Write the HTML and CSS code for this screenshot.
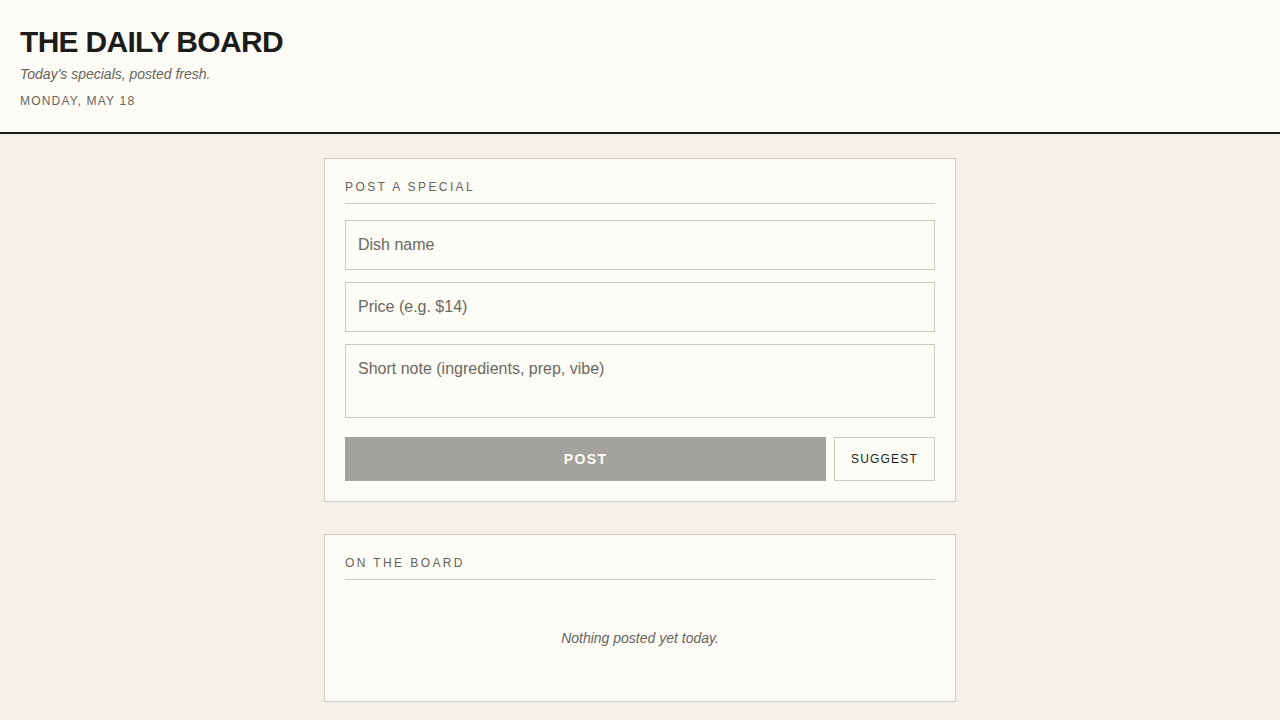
FILE: index.html
```html
<!DOCTYPE html>
<html lang="en">
<head>
    <meta charset="UTF-8">
    <title>The Daily Board</title>
    <link rel="stylesheet" href="styles.css">
</head>
<body>
<header class="masthead">
    <h1 class="title">THE DAILY BOARD</h1>
    <p class="tagline">Today's specials, posted fresh.</p>
    <p class="date">MONDAY, MAY 18</p>
</header>
<main class="page">
    <section class="card">
        <h2 class="card-head">POST A SPECIAL</h2>
        <form class="form">
            <input class="field" type="text" placeholder="Dish name">
            <input class="field" type="text" placeholder="Price (e.g. $14)">
            <textarea class="field note" placeholder="Short note (ingredients, prep, vibe)"></textarea>
            <div class="actions">
                <button type="button" class="btn-post">POST</button>
                <button type="button" class="btn-suggest">SUGGEST</button>
            </div>
        </form>
    </section>
    <section class="card">
        <h2 class="card-head">ON THE BOARD</h2>
        <p class="empty">Nothing posted yet today.</p>
    </section>
</main>
</body>
</html>
```
FILE: styles.css
```css
* {
    margin: 0;
    padding: 0;
    box-sizing: border-box;
}

body {
    background: #f4f1ea;
    font-family: "Liberation Sans", Arial, sans-serif;
    color: #1c1c1a;
}

.masthead {
    background: #fdfcf7;
    border-bottom: 2px solid #1c1c1a;
    padding: 24px 20px 0;
    height: 134px;
}

.title {
    font-size: 30px;
    line-height: 36px;
    font-weight: bold;
    letter-spacing: -0.7px;
    color: #1c1c1a;
}

.tagline {
    margin-top: 5px;
    font-size: 14px;
    line-height: 18px;
    font-style: italic;
    color: #66645c;
}

.date {
    margin-top: 10px;
    font-size: 12px;
    line-height: 16px;
    letter-spacing: 1.2px;
    color: #66645c;
}

.page {
    width: 632px;
    margin: 24px auto 0;
    display: flex;
    flex-direction: column;
    gap: 32px;
}

.card {
    background: #fdfcf7;
    border: 1px solid #cfcbbf;
    padding: 20px;
}

.card-head {
    font-size: 12px;
    line-height: 16px;
    font-weight: normal;
    letter-spacing: 2.4px;
    color: #66645c;
    padding-bottom: 8px;
    border-bottom: 1px solid #cfcbbf;
}

.form {
    display: flex;
    flex-direction: column;
    gap: 12px;
    margin-top: 16px;
}

.field {
    width: 100%;
    height: 50px;
    padding: 0 12px;
    background: #fdfcf7;
    border: 1px solid #cfcbbf;
    font-family: "Liberation Sans", Arial, sans-serif;
    font-size: 16px;
    color: #1c1c1a;
    outline: none;
}

.field::placeholder {
    color: #6b695f;
}

.note {
    height: 74px;
    padding: 14px 12px;
    resize: none;
    line-height: 20px;
}

.actions {
    display: flex;
    gap: 8px;
    margin-top: 7px;
}

.btn-post {
    flex: 1;
    height: 44px;
    background: #a3a29d;
    border: 0;
    color: #fdfcf7;
    font-family: "Liberation Sans", Arial, sans-serif;
    font-size: 14px;
    font-weight: bold;
    letter-spacing: 1.4px;
    cursor: pointer;
}

.btn-suggest {
    width: 101px;
    height: 44px;
    background: #fdfcf7;
    border: 1px solid #cfcbbf;
    color: #1c1c1a;
    font-family: "Liberation Sans", Arial, sans-serif;
    font-size: 12px;
    letter-spacing: 1.2px;
    cursor: pointer;
}

.empty {
    padding: 49px 0 34px;
    text-align: center;
    font-size: 14px;
    line-height: 18px;
    font-style: italic;
    color: #66645c;
}
```
